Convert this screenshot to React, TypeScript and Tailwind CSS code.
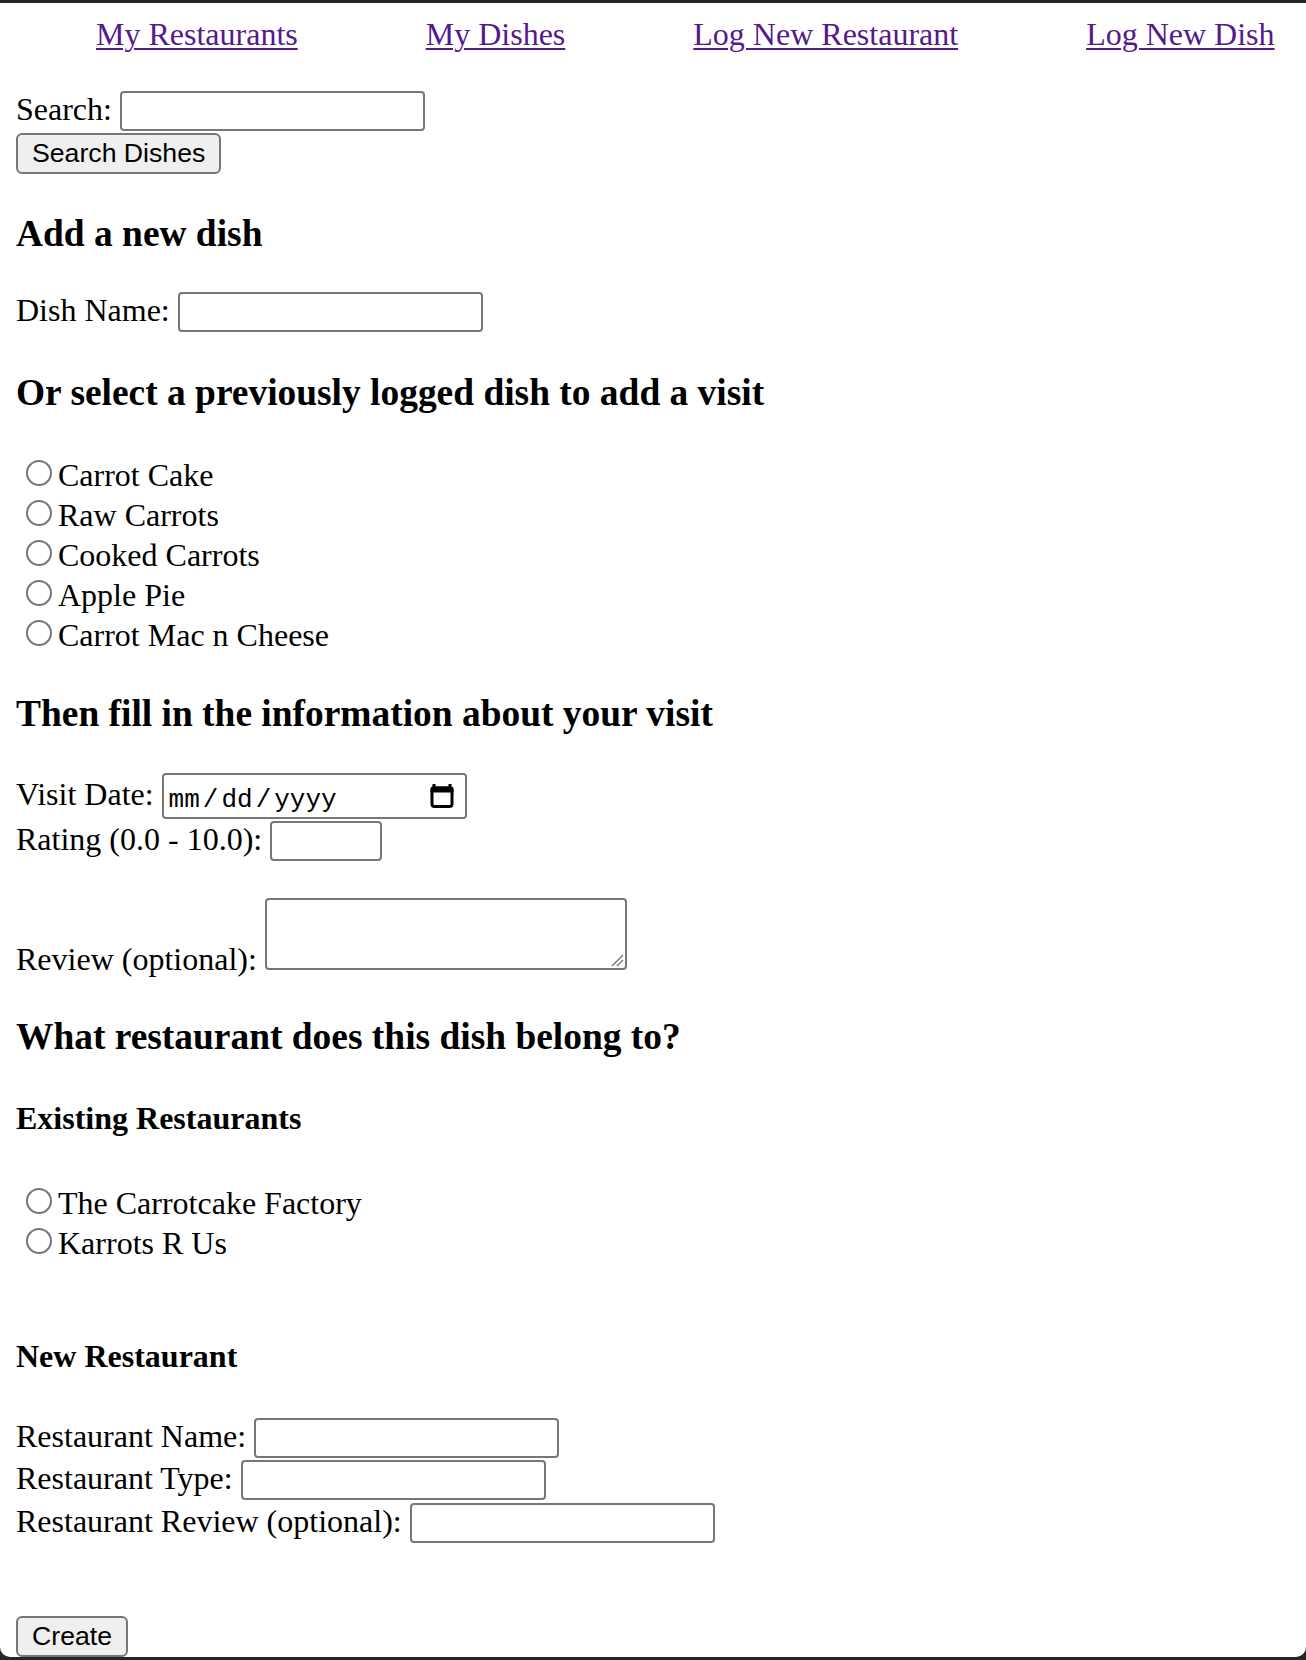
import React from 'react';

const inputCls =
  "h-[40px] w-[305px] rounded-[4px] border-2 border-[#767676] bg-white px-[4px] text-[26.67px] font-['Liberation_Sans',Arial,sans-serif] outline-none";
const buttonCls =
  "h-[41px] rounded-[6px] border-2 border-[#767676] bg-[#efefef] px-[14px] text-[26.67px] leading-none text-black font-['Liberation_Sans',Arial,sans-serif]";

const navLinks = ['My Restaurants', 'My Dishes', 'Log New Restaurant', 'Log New Dish'];
const dishes = ['Carrot Cake', 'Raw Carrots', 'Cooked Carrots', 'Apple Pie', 'Carrot Mac n Cheese'];
const restaurants = ['The Carrotcake Factory', 'Karrots R Us'];

const Field: React.FC<{ label: string; className?: string; narrow?: boolean }> = ({ label, className = '', narrow }) => (
  <div className={`flex items-center gap-[8px] ${className}`}>
    <label className="-mt-[4px] leading-[37px]">{label}</label>
    <input type="text" className={narrow ? inputCls.replace('w-[305px]', 'w-[112px]') : inputCls} />
  </div>
);

const Radio: React.FC<{ label: string; name: string }> = ({ label, name }) => (
  <label className="flex h-[40px] items-end" data-name={name}>
    <span className="mb-[8px] ml-[10px] mr-[6px] h-[26px] w-[26px] shrink-0 rounded-full border-2 border-[#767676] bg-white" />
    <span className="leading-[37px]">{label}</span>
  </label>
);

// chrome style calendar glyph for the date field
const CalendarIcon = () => (
  <svg width="24" height="24" viewBox="0 0 24 24" fill="#000">
    <rect x="2.5" y="0" width="3" height="4" />
    <rect x="18.5" y="0" width="3" height="4" />
    <path d="M3 2.5h18a2.5 2.5 0 0 1 2.5 2.5v3.5h-23V5A2.5 2.5 0 0 1 3 2.5z" />
    <rect x="2" y="4" width="20" height="18.5" rx="2.5" fill="none" stroke="#000" strokeWidth="3" />
  </svg>
);

const App: React.FC = () => {
  return (
    <div className="h-[1660px] overflow-hidden bg-[#262626] pt-[3px]">
      <div className="h-[1654px] rounded-b-[10px] bg-white px-[16px] pt-[13px] text-[32px] text-black font-['Liberation_Serif','Times_New_Roman',serif]">
        {/* nav */}
        <nav className="flex gap-[128px] pl-[80px] leading-[37px]">
          {navLinks.map((l) => (
            <a key={l} href="#" className="text-[#551A8B] underline decoration-[2px] underline-offset-[3px]">
              {l}
            </a>
          ))}
        </nav>

        {/* search */}
        <div className="mt-[38px] flex items-center gap-[8px]">
          <label className="-mt-[4px] leading-[37px]">Search:</label>
          <input type="text" className={inputCls} />
        </div>
        <button className={`mt-[2px] block ${buttonCls}`}>Search Dishes</button>

        <h3 className="mt-[38px] text-[37.44px] font-bold leading-[43px]">Add a new dish</h3>
        <Field label="Dish Name:" className="mt-[37px]" />

        <h3 className="mt-[39px] text-[37.44px] font-bold leading-[43px]">Or select a previously logged dish to add a visit</h3>
        <div className="mt-[40px]">
          {dishes.map((d) => (
            <Radio key={d} label={d} name="dish" />
          ))}
        </div>

        <h3 className="mt-[38px] text-[37.44px] font-bold leading-[43px]">Then fill in the information about your visit</h3>
        <div className="mt-[38px] flex items-center gap-[8px]">
          <label className="-mt-[4px] leading-[37px]">Visit Date:</label>
          <div className="flex h-[46px] w-[305px] items-center justify-between rounded-[4px] border-2 border-[#767676] pl-[5px] pr-[11px]">
            <span className="mt-[7px] text-[26px] leading-none font-['Liberation_Mono','Courier_New',monospace]">
              mm<span className="mx-[3px]">/</span>dd<span className="mx-[3px]">/</span>yyyy
            </span>
            <CalendarIcon />
          </div>
        </div>
        <Field label="Rating (0.0 - 10.0):" className="mt-[2px]" narrow />

        <div className="mt-[37px] flex items-end gap-[8px]">
          <label className="mb-[-8px] leading-[37px]">Review (optional):</label>
          <div className="relative">
            <textarea className="block h-[72px] w-[362px] resize-none rounded-[4px] border-2 border-[#767676] bg-white outline-none" />
            <svg className="absolute bottom-[3px] right-[3px]" width="14" height="14" viewBox="0 0 14 14" stroke="#767676" strokeWidth="1.5">
              <line x1="2" y1="13" x2="13" y2="2" />
              <line x1="7" y1="13" x2="13" y2="7" />
            </svg>
          </div>
        </div>

        <h3 className="mt-[45px] text-[37.44px] font-bold leading-[43px]">What restaurant does this dish belong to?</h3>
        <h4 className="mt-[42px] text-[32px] font-bold leading-[37px]">Existing Restaurants</h4>
        <div className="mt-[45px]">
          {restaurants.map((r) => (
            <Radio key={r} label={r} name="restaurant" />
          ))}
        </div>

        <h4 className="mt-[76px] text-[32px] font-bold leading-[37px]">New Restaurant</h4>
        <Field label="Restaurant Name:" className="mt-[43px]" />
        <Field label="Restaurant Type:" className="mt-[2px]" />
        <Field label="Restaurant Review (optional):" className="mt-[3px]" />

        <button className={`mt-[73px] block ${buttonCls}`}>Create</button>
      </div>
    </div>
  );
};

export default App;
